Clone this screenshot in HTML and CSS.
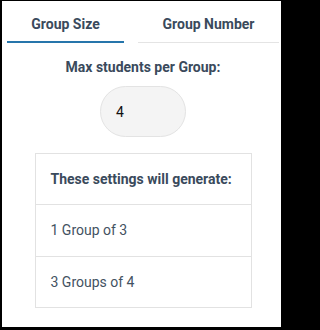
FILE: index.html
```html
<!DOCTYPE html>
<html>
<head>
<meta charset="utf-8">
<link rel="stylesheet" href="styles.css">
</head>
<body>
<div class="panel">
  <div class="tabs">
    <div class="tab active">Group Size</div>
    <div class="tab">Group Number</div>
  </div>
  <div class="content">
    <div class="label">Max students per Group:</div>
    <div class="pill">4</div>
    <div class="table">
      <div class="row head">These settings will generate:</div>
      <div class="row mid">1 Group of 3</div>
      <div class="row">3 Groups of 4</div>
    </div>
  </div>
</div>
</body>
</html>
```
FILE: styles.css
```css
html, body {
  margin: 0;
  padding: 0;
  background: #000;
  width: 286px;
  height: 330px;
  overflow: hidden;
}
body {
  font-family: Roboto, "Liberation Sans", sans-serif;
  font-size: 14px;
  line-height: 16px;
}
.panel {
  margin: 1px 0 0 2px;
  width: 279px;
  height: 326px;
  background: #fff;
  box-sizing: border-box;
}
.tabs {
  display: flex;
  align-items: flex-end;
  gap: 14px;
  padding-left: 5px;
}
.tab {
  padding: 15px 24px 9px;
  color: #3a4a5c;
  font-weight: 700;
  text-align: center;
  border-bottom: 1px solid #e4e4e4;
}
.tab.active {
  width: 69px;
  border-bottom: 2px solid #2675ab;
}
.tab:not(.active) {
  padding-bottom: 10px;
  width: 93px;
}
.content {
  display: flex;
  flex-direction: column;
  align-items: center;
  margin-left: 3px;
}
.label {
  margin-top: 16px;
  color: #3a4a5c;
  font-weight: 700;
}
.pill {
  margin-top: 11px;
  width: 86px;
  height: 51px;
  box-sizing: border-box;
  border: 1px solid #e3e3e3;
  border-radius: 26px;
  background: #f4f4f4;
  padding-left: 15px;
  display: flex;
  align-items: center;
  color: #111;
}
.table {
  margin-top: 16px;
  width: 217px;
  border: 1px solid #e2e2e2;
  box-sizing: border-box;
}
.row {
  padding: 17px 15px;
  color: #435262;
  border-top: 1px solid #e2e2e2;
}
.row.mid {
  padding-bottom: 18px;
}
.row.head {
  border-top: none;
  font-weight: 700;
  color: #3a4a5c;
}
```
